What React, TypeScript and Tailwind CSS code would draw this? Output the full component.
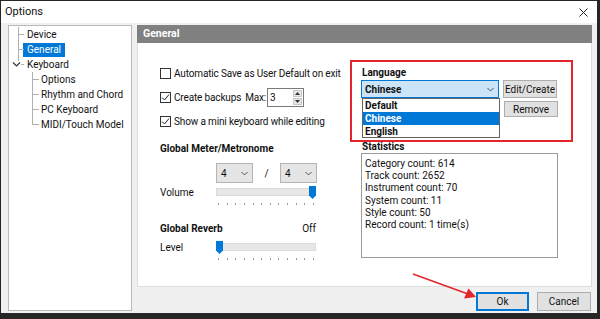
import React from "react";

const Check = ({ checked }: { checked: boolean }) => (
  <span className="w-[11px] h-[11px] border border-[#333] bg-white flex items-center justify-center shrink-0">
    {checked && (
      <svg width="9" height="9" viewBox="0 0 9 9">
        <path d="M1 4.5 L3.5 7 L8 1.5" fill="none" stroke="#222" strokeWidth="1" />
      </svg>
    )}
  </span>
);

const Chevron = () => (
  <svg width="7" height="5" viewBox="0 0 7 5">
    <path d="M0.5 1 L3.5 4 L6.5 1" fill="none" stroke="#555" strokeWidth="1" />
  </svg>
);

const Ticks = () => (
  <div className="flex justify-between w-[96px] ml-[2px]">
    {Array.from({ length: 12 }).map((_, i) => (
      <span key={i} className="w-[1px] h-[2px] bg-[#999]" />
    ))}
  </div>
);

const Thumb = () => (
  <svg width="7" height="13" viewBox="0 0 7 13">
    <path d="M0 0 H7 V9.5 L3.5 13 L0 9.5 Z" fill="#0078d7" />
  </svg>
);

const TreeRow = ({
  level,
  label,
  selected,
  expander,
  last,
}: {
  level: number;
  label: string;
  selected?: boolean;
  expander?: boolean;
  last?: boolean;
}) => (
  <div className="relative h-[15px] flex items-center whitespace-nowrap">
    <span
      className={`absolute top-0 w-0 border-l border-[#b0b0b0] ${level === 0 ? "left-[9px]" : "left-[23px]"} ${last ? "h-[8px]" : "h-[15px]"}`}
    />
    <span
      className={`absolute top-[7px] h-0 border-t border-[#b0b0b0] ${level === 0 ? "left-[9px] w-[6px]" : "left-[23px] w-[7px]"}`}
    />
    {expander && (
      <span className="absolute left-[3px] top-[4px] bg-white">
        <svg width="9" height="7" viewBox="0 0 9 7">
          <path d="M1 1.5 L4.5 5 L8 1.5" fill="none" stroke="#333" strokeWidth="1.2" />
        </svg>
      </span>
    )}
    <span
      className={`${level === 0 ? "ml-[14px]" : "ml-[28px]"} px-[4px] h-[14px] flex items-center ${selected ? "bg-[#0078d7] text-white" : "text-[#111]"}`}
    >
      {label}
    </span>
  </div>
);

export default function App() {
  return (
    <div className="w-[600px] h-[319px] bg-[#262626] overflow-hidden relative font-['Roboto',sans-serif] text-[10px] text-[#111]">
      <div className="ml-[1px] mt-[1px] w-[596px] h-[312px] bg-[#f0f0f0] flex flex-col">
        <div className="h-[22px] bg-white flex items-center justify-between pl-[4px] pr-[9px] text-[11px]">
          <span>Options</span>
          <svg width="9" height="9" viewBox="0 0 9 9">
            <path d="M0.5 0.5 L8.5 8.5 M8.5 0.5 L0.5 8.5" stroke="#222" strokeWidth="1" />
          </svg>
        </div>
        <div className="flex pl-[7px] pt-[2px]">
          <div className="w-[124px] h-[286px] bg-white border border-[#b9b9b9] pt-[1px] text-[10px]">
            <TreeRow level={0} label="Device" />
            <TreeRow level={0} label="General" selected />
            <TreeRow level={0} label="Keyboard" expander last />
            <TreeRow level={1} label="Options" />
            <TreeRow level={1} label="Rhythm and Chord" />
            <TreeRow level={1} label="PC Keyboard" />
            <TreeRow level={1} label="MIDI/Touch Model" last />
          </div>
          <div className="ml-[5px] w-[455px] flex flex-col">
            <div className="h-[18px] bg-[#808080] text-white font-bold pl-[6px] flex items-center text-[10.5px]">
              General
            </div>
            <div className="h-[244px] bg-white border-r border-b border-l border-[#dcdcdc] flex relative">
              {/* left column */}
              <div className="w-[223px] pl-[22px] flex flex-col whitespace-nowrap">
                <div className="mt-[23px] h-[14px] flex items-center gap-[3px] tracking-[-0.15px]">
                  <Check checked={false} />
                  <span>Automatic Save as User Default on exit</span>
                </div>
                <div className="mt-[8px] h-[19px] flex items-center gap-[3px] tracking-[-0.15px]">
                  <Check checked />
                  <span>Create backups</span>
                  <span className="ml-[1px] mr-[-2px]">Max:</span>
                  <div className="w-[37px] h-[19px] border border-[#7a7a7a] bg-white flex items-center justify-between pl-[2px] pr-[1px]">
                    <span>3</span>
                    <div className="flex flex-col gap-[1px]">
                      <span className="w-[9px] h-[7px] bg-[#e6e6e6] border border-[#c8c8c8] flex items-center justify-center">
                        <svg width="5" height="3" viewBox="0 0 5 3"><path d="M0 3 L2.5 0 L5 3Z" fill="#333" /></svg>
                      </span>
                      <span className="w-[9px] h-[7px] bg-[#e6e6e6] border border-[#c8c8c8] flex items-center justify-center">
                        <svg width="5" height="3" viewBox="0 0 5 3"><path d="M0 0 L2.5 3 L5 0Z" fill="#333" /></svg>
                      </span>
                    </div>
                  </div>
                </div>
                <div className="mt-[7px] h-[14px] flex items-center gap-[3px] tracking-[-0.15px]">
                  <Check checked />
                  <span>Show a mini keyboard while editing</span>
                </div>
                <div className="mt-[13px] h-[14px] flex items-center font-bold">Global Meter/Metronome</div>
                <div className="mt-[8px] h-[20px] flex items-center pl-[56px]">
                  <div className="w-[37px] h-[20px] bg-[#e5e5e5] border border-[#b4b4b4] flex items-center justify-between px-[4px]">
                    <span>4</span>
                    <Chevron />
                  </div>
                  <span className="w-[27px] text-center">/</span>
                  <div className="w-[37px] h-[20px] bg-[#e5e5e5] border border-[#b4b4b4] flex items-center justify-between px-[4px]">
                    <span>4</span>
                    <Chevron />
                  </div>
                </div>
                <div className="mt-[2px] h-[14px] flex items-center">
                  <span className="w-[56px]">Volume</span>
                  <div className="relative w-[100px] h-[8px] bg-[#e7e7e7] border border-[#dadada]">
                    <span className="absolute right-[-1px] top-[-3px]">
                      <Thumb />
                    </span>
                  </div>
                </div>
                <div className="h-[6px] flex items-end pl-[56px]">
                  <Ticks />
                </div>
                <div className="mt-[16px] h-[14px] flex items-center justify-between w-[156px]">
                  <span className="font-bold">Global Reverb</span>
                  <span>Off</span>
                </div>
                <div className="mt-[5px] h-[14px] flex items-center">
                  <span className="w-[56px]">Level</span>
                  <div className="relative w-[100px] h-[8px] bg-[#e7e7e7] border border-[#dadada]">
                    <span className="absolute left-[-1px] top-[-3px]">
                      <Thumb />
                    </span>
                  </div>
                </div>
                <div className="h-[6px] flex items-end pl-[56px]">
                  <Ticks />
                </div>
              </div>
              {/* right column */}
              <div className="w-[198px] flex flex-col whitespace-nowrap">
                <div className="mt-[22px] h-[14px] flex items-center font-bold pl-[1px]">Language</div>
                <div className="mt-[1px] flex gap-[4px]">
                  <div className="relative w-[138px] h-[18px] bg-[#cce4f7] border border-[#0078d7] flex items-center justify-between pl-[3px] pr-[4px] font-bold">
                    <span>Chinese</span>
                    <Chevron />
                    <div className="absolute left-[0px] top-[17px] w-[138px] bg-white border border-[#646464] font-bold z-10">
                      <div className="h-[13px] flex items-center pl-[2px]">Default</div>
                      <div className="h-[13px] flex items-center pl-[2px] bg-[#0078d7] text-white">Chinese</div>
                      <div className="h-[12px] flex items-center pl-[2px]">English</div>
                    </div>
                  </div>
                  <div className="w-[54px] h-[18px] bg-[#e1e1e1] border border-[#adadad] flex items-center justify-center">
                    Edit/Create
                  </div>
                </div>
                <div className="mt-[3px] flex justify-end pr-[1px]">
                  <div className="w-[54px] h-[16px] bg-[#e1e1e1] border border-[#adadad] flex items-center justify-center">
                    Remove
                  </div>
                </div>
                <div className="mt-[23px] h-[13px] flex items-center font-bold pl-[1px]">Statistics</div>
                <div className="w-[197px] h-[105px] border border-[#9a9a9a] bg-white pt-[4px] pl-[3px] leading-[12.2px]">
                  <div>Category count: 614</div>
                  <div>Track count: 2652</div>
                  <div>Instrument count: 70</div>
                  <div>System count: 11</div>
                  <div>Style count: 50</div>
                  <div>Record count: 1 time(s)</div>
                </div>
              </div>
              {/* annotation box */}
              <div className="absolute left-[212px] top-[17px] w-[223px] h-[82px] border-2 border-[#e3262b]" />
            </div>
            <div className="mt-[5px] flex justify-end gap-[8px] pr-[1px]">
              <div className="w-[53px] h-[19px] bg-[#e1e1e1] border-2 border-[#0078d7] flex items-center justify-center">Ok</div>
              <div className="w-[54px] h-[19px] bg-[#e1e1e1] border border-[#adadad] flex items-center justify-center">Cancel</div>
            </div>
          </div>
        </div>
      </div>
      <svg className="absolute left-[410px] top-[270px]" width="70" height="32" viewBox="0 0 70 32">
        <path d="M3 4 L58 24" stroke="#e3262b" strokeWidth="1.6" />
        <path d="M66 27 L54 28.5 L58.5 18.5 Z" fill="#e3262b" />
      </svg>
    </div>
  );
}
